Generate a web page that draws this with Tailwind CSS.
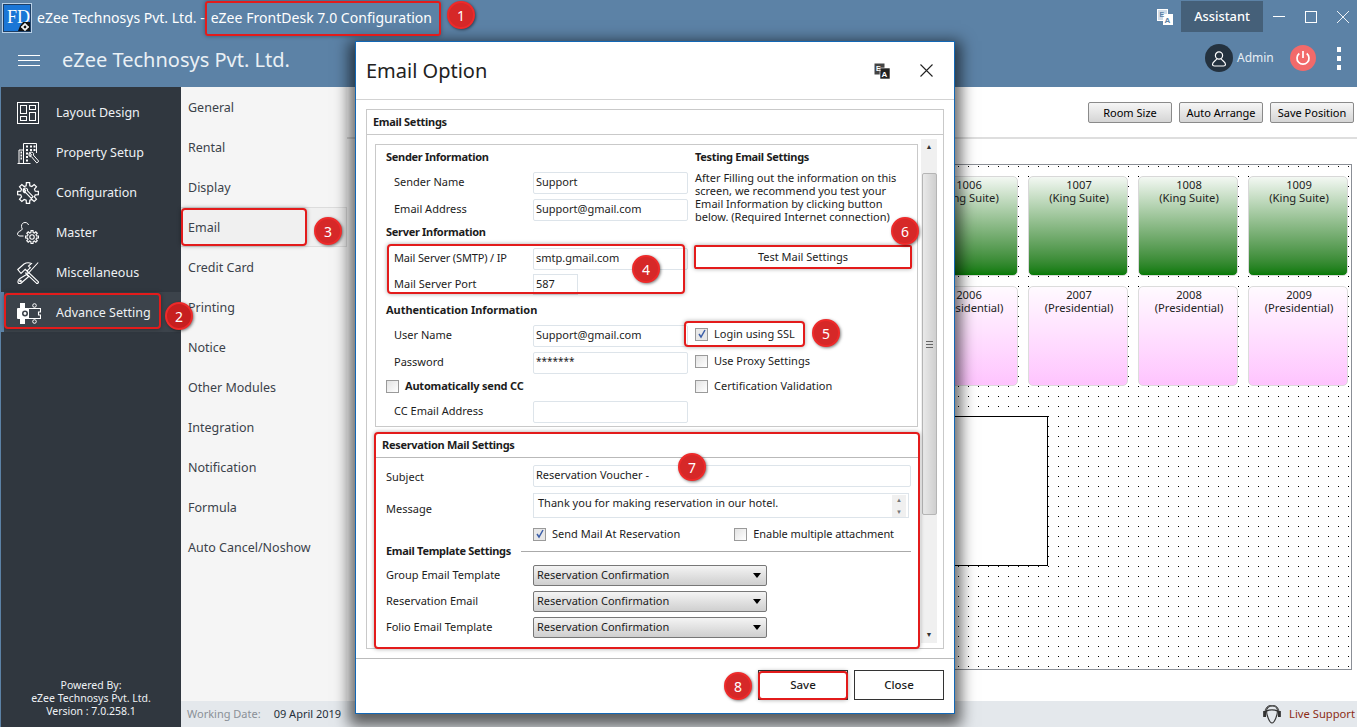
<!DOCTYPE html>
<html>
<head>
<meta charset="utf-8">
<script src="https://cdn.jsdelivr.net/npm/@tailwindcss/browser@4"></script>
</head>
<body class="m-0 overflow-hidden bg-white font-['Noto_Sans','Open_Sans',sans-serif] text-[#222]">
<div class="relative flex h-[727px] w-[1357px] flex-col overflow-hidden">
  <!-- Title + app header -->
  <header class="flex h-[87px] flex-col bg-[#5c82a6] text-white">
    <div class="flex h-[33px] items-center pl-[2px]">
      <div class="relative mt-[2px] h-[30px] w-[30px] border-2 border-[#b9d0e6] bg-[#1a76d6] outline outline-[#1d3f66] -outline-offset-2">
        <span class="absolute left-[3px] top-[3px] font-['Liberation_Serif',serif] text-[18px] leading-[18px] text-white">FD</span>
        <svg class="absolute bottom-0 right-0" width="12" height="9" viewBox="0 0 12 9"><path d="M0 9l2-5 3-4h7v9z" fill="#111"/><circle cx="7" cy="5" r="2.200" fill="none" stroke="#fff" stroke-width="1.500"/><path d="M7 1v1.500M7 7.500V9M3 5h1.500M9.500 5H11" stroke="#fff" stroke-width="1.300"/></svg>
      </div>
      <span class="ml-[5px] whitespace-nowrap pt-[2px] text-[14px]">eZee Technosys Pvt. Ltd. -</span>
      <span class="ml-[6px] whitespace-nowrap pt-[2px] text-[14px] tracking-[0.03px]">eZee FrontDesk 7.0 Configuration</span>
      <div class="ml-auto flex items-center">
        <svg class="mr-[8px]" width="16" height="16" viewBox="0 0 16 16"><rect x=".5" y=".5" width="10" height="11" fill="#cfdce8" stroke="#fff"/><rect x="6" y="5" width="10" height="11" fill="#fff"/><text x="2.500" y="8" font-size="7" font-weight="700" fill="#5c82a6" font-family="Liberation Sans">E</text><text x="7.500" y="14" font-size="8" font-weight="700" fill="#5c82a6" font-family="Liberation Sans">A</text></svg>
        <div class="flex h-[31px] w-[82px] items-center justify-center bg-[#456079] text-[12.800px] font-medium">Assistant</div>
        <div class="flex items-center gap-[20px] pl-[10px] pr-[8px]">
          <svg width="12" height="12" viewBox="0 0 12 12"><path d="M0 5.500h12" stroke="#fff"/></svg>
          <svg width="12" height="12" viewBox="0 0 12 12"><rect x=".5" y=".5" width="11" height="11" fill="none" stroke="#fff"/></svg>
          <svg width="12" height="12" viewBox="0 0 12 12"><path d="M0 0l12 12M12 0L0 12" stroke="#fff" stroke-width=".9"/></svg>
        </div>
      </div>
    </div>
    <div class="flex h-[54px] items-center pl-[18px]">
      <div class="flex w-[22px] flex-col gap-[4px]"><span class="h-px bg-white"></span><span class="h-px bg-white"></span><span class="h-px bg-white"></span></div>
      <span class="ml-[22px] text-[20px] text-[#eaf0f5]">eZee Technosys Pvt. Ltd.</span>
      <div class="mb-[4px] ml-auto flex items-center pr-[16px]">
        <div class="flex h-[28px] w-[28px] items-center justify-center rounded-full bg-[#24323f]">
          <svg width="16" height="17" viewBox="0 0 16 17" fill="none" stroke="#fff" stroke-width="1.200"><circle cx="8" cy="5.500" r="3.600"/><path d="M5.800 8.600C5 11 1.500 11.500 1.500 14.500c0 1 1 1.500 2 1.500h9c1 0 2-.5 2-1.500 0-3-3.500-3.500-4.300-5.900"/></svg>
        </div>
        <span class="ml-[4px] w-[36px] text-[12px] text-[#e7eef5]">Admin</span>
        <div class="ml-[17px] flex h-[26px] w-[26px] items-center justify-center rounded-full bg-[#f26a6a]">
          <svg width="16" height="16" viewBox="0 0 16 16" fill="none" stroke="#fff" stroke-width="1.700"><path d="M8 1v7"/><path d="M4.300 3.500a6 6 0 1 0 7.400 0"/></svg>
        </div>
        <div class="ml-[21px] flex flex-col gap-[4px]"><span class="h-[5px] w-[4px] bg-white"></span><span class="h-[5px] w-[4px] bg-white"></span><span class="h-[5px] w-[4px] bg-white"></span></div>
      </div>
    </div>
  </header>

  <div class="flex min-h-0 flex-1">
    <!-- Sidebar -->
    <aside class="flex w-[181px] flex-col border-l border-[#5c82a6] bg-[#30373f] text-[12.500px] text-[#eef1f4]">
      <nav class="flex flex-col pt-[5px]">
        <a class="flex h-[40px] items-center pl-[16px] pt-[2px]">
          <svg class="mr-[17px]" width="22" height="22" viewBox="0 0 22 22" fill="none" stroke="#fff"><rect x=".5" y=".5" width="21" height="21"/><rect x="3.500" y="3.500" width="6" height="8"/><rect x="12.500" y="3.500" width="6" height="4"/><rect x="3.500" y="14.500" width="6" height="4"/><rect x="12.500" y="10.500" width="6" height="8"/></svg>
          Layout Design</a>
        <a class="flex h-[40px] items-center pl-[16px] pt-[2px]">
          <svg class="mr-[17px]" width="22" height="22" viewBox="0 0 22 22" fill="none" stroke="#fff"><path d="M.5 21.500h13M2 21V8h4.500M6.500 21V1.500h13V11"/><path d="M3.500 10.500h1.500M3.500 13.500h1.500M3.500 16.500h1.500M9 4.500h2M13 4.500h2M16.500 4.500h2M9 8h2M13 8h2M16.500 8h2M9 11.500h2M9 15h2M9 18.500h2" stroke-width="1.800"/><path d="M13 10.500c-1.500 1.200-1.500 3 0 4.300l1.300-.3 5.500 6.500 2-1.700-5.500-6.300.4-1.500c-1-1.500-3-1.700-4.200-.8l2 1.800-.4 1.200-1.200.2z" fill="#30373f"/></svg>
          Property Setup</a>
        <a class="flex h-[40px] items-center pl-[16px] pt-[2px]">
          <svg class="mr-[17px]" width="22" height="22" viewBox="0 0 22 22" fill="none" stroke="#fff"><polygon stroke-width="1.200" points="18.280,9.190 21.370,9.360 21.370,12.640 18.280,12.810 17.430,14.860 19.490,17.170 17.170,19.490 14.860,17.430 12.810,18.280 12.640,21.370 9.360,21.370 9.190,18.280 7.140,17.430 4.830,19.490 2.510,17.170 4.570,14.860 3.720,12.810 .63,12.640 .63,9.360 3.720,9.190 4.570,7.140 2.510,4.830 4.830,2.510 7.140,4.570 9.190,3.720 9.360,.63 12.640,.63 12.810,3.720 14.860,4.570 17.170,2.510 19.490,4.830 17.430,7.140"/><path d="M7 6.500c-1.300 1.300-1.200 3 .2 4.200l1.300-.3 5.800 6 1.800-1.700-5.800-6 .3-1.400c-1-1.300-2.700-1.500-3.800-.7l1.800 1.800-.5 1.100-1.200.2z" stroke-width="1.100"/></svg>
          Configuration</a>
        <a class="flex h-[40px] items-center pl-[16px] pt-[2px]">
          <svg class="mr-[17px]" width="22" height="22" viewBox="0 0 22 22" fill="none" stroke="#fff"><path d="M6.500 14H3c-1.500 0-2.500-1-2.500-2 0-3 4.300-2.800 4.800-5C4.500 5.500 4.500 4.500 4.500 4 4.500 2 6 .5 8 .5S11 1.500 11.500 3"/><g transform="translate(8.200 8.200) scale(.62)"><polygon stroke-width="1.800" points="18.280,9.190 21.370,9.360 21.370,12.640 18.280,12.810 17.430,14.860 19.490,17.170 17.170,19.490 14.860,17.430 12.810,18.280 12.640,21.370 9.360,21.370 9.190,18.280 7.140,17.430 4.830,19.490 2.510,17.170 4.570,14.860 3.720,12.810 .63,12.640 .63,9.360 3.720,9.190 4.570,7.140 2.510,4.830 4.830,2.510 7.140,4.570 9.190,3.720 9.360,.63 12.640,.63 12.810,3.720 14.860,4.570 17.170,2.510 19.490,4.830 17.430,7.140"/><circle cx="11" cy="11" r="3.600" stroke-width="1.800"/></g></svg>
          Master</a>
        <a class="flex h-[40px] items-center pl-[16px] pt-[2px]">
          <svg class="mr-[17px]" width="22" height="22" viewBox="0 0 22 22" fill="none" stroke="#fff" stroke-width="1.100"><path d="M.8 7.500L7 2c2.500-1.500 5-1.500 7.500-.5L11.500 4l1.800 1.800L10 9 8.200 7.300 4 11.500z"/><path d="M10 9l11.200 10.500c.8 1-.8 2.500-1.800 1.700L8.200 10.600"/><path d="M21.200.5L11 11.500l-1.300-1"/><path d="M9.500 12.500L3 16.500c-3 2-2.500 5.500 0 5 1 0 1.500-.8 2.300-1.500l6.500-5.500z"/><circle cx="3.500" cy="19" r=".8"/></svg>
          Miscellaneous</a>
        <a class="relative flex h-[40px] items-center bg-[#3c434b] pl-[16px] pt-[2px] before:absolute before:bottom-0 before:left-[-1px] before:top-0 before:w-[4px] before:bg-[#5c82a6]">
          <svg class="mr-[15px]" width="24" height="21" viewBox="0 0 24 21"><path d="M3 0h5v5h3.500a.5.500 0 0 1 .5.500V16H8v5H3v-5H1a1 1 0 0 1-1-1V6a1 1 0 0 1 1-1h2z" fill="#fff"/><circle cx="8" cy="10.500" r="3" fill="#3c434b"/><circle cx="8" cy="10.500" r="1.400" fill="#fff"/><path d="M12 5.500h11.500v3.500h-2v3h2v3.500H12" fill="none" stroke="#fff" stroke-width="1.100"/><circle cx="17.500" cy="2.500" r="1.800" fill="none" stroke="#fff"/><circle cx="17.500" cy="18.500" r="1.800" fill="none" stroke="#fff"/></svg>
          Advance Setting</a>
      </nav>
      <div class="mt-auto pb-[9px] text-center text-[10.500px] leading-[13px]">Powered By:<br>eZee Technosys Pvt. Ltd.<br>Version : 7.0.258.1</div>
    </aside>

    <!-- Main column -->
    <div class="flex min-w-0 flex-1 flex-col">
      <div class="flex min-h-0 flex-1">
        <div class="flex w-[166px] flex-col bg-[#f5f5f5] text-[12.500px] text-[#3b424a]">
          <a class="flex h-[40px] items-center pl-[7px] pt-[3px]">General</a>
          <a class="flex h-[40px] items-center pl-[7px] pt-[3px]">Rental</a>
          <a class="flex h-[40px] items-center pl-[7px] pt-[3px]">Display</a>
          <a class="flex h-[40px] items-center border-y border-r border-[#dcdcdc] bg-[#f0f0f0] pl-[7px] pt-[3px]">Email</a>
          <a class="flex h-[40px] items-center pl-[7px] pt-[3px]">Credit Card</a>
          <a class="flex h-[40px] items-center pl-[7px] pt-[3px]">Printing</a>
          <a class="flex h-[40px] items-center pl-[7px] pt-[3px]">Notice</a>
          <a class="flex h-[40px] items-center pl-[7px] pt-[3px]">Other Modules</a>
          <a class="flex h-[40px] items-center pl-[7px] pt-[3px]">Integration</a>
          <a class="flex h-[40px] items-center pl-[7px] pt-[3px]">Notification</a>
          <a class="flex h-[40px] items-center pl-[7px] pt-[3px]">Formula</a>
          <a class="flex h-[40px] items-center pl-[7px] pt-[3px]">Auto Cancel/Noshow</a>
        </div>
        <main class="flex min-w-0 flex-1 flex-col pl-[9px] pr-[5px]">
          <div class="ml-[-9px] mr-[-5px] flex h-[52px] shrink-0 items-center justify-end gap-[7px] border-b-2 border-[#dedede] pr-[3px]">
            <button class="h-[21px] w-[84px] rounded-[2px] border border-[#8a8a8a] bg-gradient-to-b from-[#f6f6f6] to-[#d5d5d5] pt-[2px] text-[11px] text-black">Room Size</button>
            <button class="h-[21px] w-[84px] rounded-[2px] border border-[#8a8a8a] bg-gradient-to-b from-[#f6f6f6] to-[#d5d5d5] pt-[2px] text-[11px] text-black">Auto Arrange</button>
            <button class="h-[21px] w-[84px] rounded-[2px] border border-[#8a8a8a] bg-gradient-to-b from-[#f6f6f6] to-[#d5d5d5] pt-[2px] text-[11px] text-black">Save Position</button>
          </div>
          <div class="relative mt-[25px] h-[506px] border border-[#8b8f96] bg-black bg-[linear-gradient(to_right,transparent_1px,white_1px),linear-gradient(to_bottom,transparent_1px,white_1px)] bg-size-[10px_10px] bg-position-[1px_1px] py-[11px] pr-[3px]">
            <div class="grid grid-cols-[repeat(4,100px)] justify-end gap-[10px] text-center text-[11.200px] leading-[13px] text-[#222]">
              <div class="h-[100px] rounded-[5px] border border-[#d8d8d8] bg-gradient-to-b from-[#f3f8f3] to-[#037a03] pl-[2px] pt-[1px]">1006<br>(King Suite)</div>
              <div class="h-[100px] rounded-[5px] border border-[#d8d8d8] bg-gradient-to-b from-[#f3f8f3] to-[#037a03] pl-[2px] pt-[1px]">1007<br>(King Suite)</div>
              <div class="h-[100px] rounded-[5px] border border-[#d8d8d8] bg-gradient-to-b from-[#f3f8f3] to-[#037a03] pl-[2px] pt-[1px]">1008<br>(King Suite)</div>
              <div class="h-[100px] rounded-[5px] border border-[#d8d8d8] bg-gradient-to-b from-[#f3f8f3] to-[#037a03] pl-[2px] pt-[1px]">1009<br>(King Suite)</div>
              <div class="h-[100px] rounded-[5px] border border-[#dcdcdc] bg-gradient-to-b from-[#fffaff] to-[#fec4fe] pl-[2px] pt-[1px]">2006<br>(Presidential)</div>
              <div class="h-[100px] rounded-[5px] border border-[#dcdcdc] bg-gradient-to-b from-[#fffaff] to-[#fec4fe] pl-[2px] pt-[1px]">2007<br>(Presidential)</div>
              <div class="h-[100px] rounded-[5px] border border-[#dcdcdc] bg-gradient-to-b from-[#fffaff] to-[#fec4fe] pl-[2px] pt-[1px]">2008<br>(Presidential)</div>
              <div class="h-[100px] rounded-[5px] border border-[#dcdcdc] bg-gradient-to-b from-[#fffaff] to-[#fec4fe] pl-[2px] pt-[1px]">2009<br>(Presidential)</div>
            </div>
            <div class="absolute left-[500px] top-[251px] h-[150px] w-[191px] border border-black bg-white"></div>
          </div>
        </main>
      </div>
      <!-- Status bar -->
      <footer class="flex h-[26px] shrink-0 items-center bg-[#e4e8ec] pl-[6px] pr-[2px] text-[11px]">
        <span class="text-[#8a9097]">Working Date:</span>
        <span class="ml-[13px] text-[#26303a]">09 April 2019</span>
        <svg class="ml-auto" width="18" height="19" viewBox="0 0 18 19" fill="none" stroke="#333"><path d="M2 9V7a7 7 0 0 1 14 0v2"/><rect x=".7" y="6.500" width="1.800" height="5" fill="#333"/><rect x="15.500" y="6.500" width="1.800" height="5" fill="#333"/><path d="M3.500 6c0-3 2.500-5 5.500-5s5.500 2 5.500 5c0 4-3 12-5.500 12S3.500 10 3.500 6zM4 6c2-1.500 8-1.500 10 0" stroke-width="1.100"/></svg>
        <span class="ml-[8px] text-[11.200px] text-[#8c2d16]">Live Support</span>
      </footer>
    </div>
  </div>

  <!-- Modal -->
  <section class="absolute left-[355px] top-[41px] flex h-[673px] w-[600px] flex-col border border-[#1267b5] bg-white text-[11px] text-[#1c1c1c] shadow-[0_6px_14px_6px_rgba(0,0,0,0.6)]">
    <div class="flex h-[58px] shrink-0 items-center border-b border-[#d3d3d3] pl-[10px] pr-[21px]">
      <h2 class="text-[20px] font-normal text-[#222]">Email Option</h2>
      <svg class="ml-auto" width="16" height="16" viewBox="0 0 16 16"><rect x=".5" y=".5" width="10" height="11" fill="#444"/><rect x="6" y="5" width="10" height="11" fill="#222" stroke="#fff" stroke-width=".6"/><text x="2" y="8" font-size="7" font-weight="700" fill="#fff" font-family="Liberation Sans">E</text><text x="7.500" y="14" font-size="8" font-weight="700" fill="#fff" font-family="Liberation Sans">A</text></svg>
      <svg class="ml-[30px]" width="13" height="13" viewBox="0 0 13 13"><path d="M.5.5l12 12M12.500.5l-12 12" stroke="#222" stroke-width="1.100"/></svg>
    </div>
    <div class="flex min-h-0 flex-1 flex-col px-[10px] pt-[9px]">
      <div class="flex h-[540px] flex-col border border-[#c9c9c9]">
        <div class="flex h-[25px] shrink-0 items-center border-b border-[#c9c9c9] pl-[6px] font-bold tracking-[-0.3px]">Email Settings</div>
        <div class="flex min-h-0 flex-1 pl-[8px] pt-[4px]">
          <div class="flex w-[543px] min-w-0 flex-col pt-[5px]">
            <!-- Upper group -->
            <div class="grid h-[283px] shrink-0 grid-cols-[309px_1fr] border border-[#c9c9c9] pl-[10px] pr-[6px]">
              <div class="flex flex-col">
                <div class="flex h-[24px] items-center font-bold tracking-[-0.3px]">Sender Information</div>
                <div class="flex h-[27px] items-center pl-[8px]"><span class="w-[139px]">Sender Name</span><div class="h-[22px] w-[155px] rounded-[2px] border border-[#dde4ea] px-[2px] pt-[1px]">Support</div></div>
                <div class="flex h-[27px] items-center pl-[8px]"><span class="w-[139px]">Email Address</span><div class="h-[22px] w-[155px] rounded-[2px] border border-[#dde4ea] px-[2px] pt-[1px]">Support@gmail.com</div></div>
                <div class="mb-[3px] flex h-[19px] items-center font-bold tracking-[-0.3px]">Server Information</div>
                <div class="flex h-[27px] items-center pl-[8px]"><span class="w-[139px] tracking-[-0.15px]">Mail Server (SMTP) / IP</span><div class="h-[22px] w-[155px] rounded-[2px] border border-[#dde4ea] px-[2px] pt-[1px]">smtp.gmail.com</div></div>
                <div class="flex h-[24px] items-center pl-[8px]"><span class="w-[139px]">Mail Server Port</span><div class="flex h-[21px] w-[45px] items-center border border-[#dde4ea] px-[2px]">587</div></div>
                <div class="flex h-[26px] items-center pt-[3px] font-bold tracking-[-0.05px]">Authentication Information</div>
                <div class="flex h-[27px] items-center pl-[8px]"><span class="w-[139px]">User Name</span><div class="h-[22px] w-[155px] rounded-[2px] border border-[#dde4ea] px-[2px] pt-[1px]">Support@gmail.com</div></div>
                <div class="flex h-[27px] items-center pl-[8px]"><span class="w-[139px]">Password</span><div class="h-[22px] w-[155px] rounded-[2px] border border-[#dde4ea] px-[2px] pt-[1px] text-[10px]">*******</div></div>
                <div class="flex h-[21px] items-center font-bold tracking-[-0.2px]"><span class="mr-[6px] h-[13px] w-[13px] border border-[#9a9a9a] bg-gradient-to-br from-[#e3e3e3] to-white"></span>Automatically send CC</div>
                <div class="flex h-[29px] items-center pl-[8px]"><span class="w-[139px]">CC Email Address</span><div class="h-[22px] w-[155px] rounded-[2px] border border-[#dde4ea]"></div></div>
              </div>
              <div class="flex flex-col">
                <div class="flex h-[26px] items-center pb-[2px] font-bold tracking-[-0.3px]">Testing Email Settings</div>
                <p class="h-[52px] leading-[13px]">After Filling out the information on this screen, we recommend you test your Email Information by clicking button below. (Required Internet connection)</p>
                <div class="mt-[23px] flex h-[23px] w-[216px] items-center justify-center border border-[#666]">Test Mail Settings</div>
                <div class="mt-[54px] flex h-[22px] items-center"><span class="mr-[6px] flex h-[13px] w-[13px] items-center justify-center border border-[#9a9a9a] bg-[#e8e8e8]"><svg width="10" height="10" viewBox="0 0 10 10"><path d="M2 5l2 3 4-7" fill="none" stroke="#3b5ea8" stroke-width="1.500"/></svg></span>Login using SSL</div>
                <div class="mt-[5px] flex h-[22px] items-center"><span class="mr-[6px] h-[13px] w-[13px] border border-[#9a9a9a] bg-gradient-to-br from-[#e3e3e3] to-white"></span>Use Proxy Settings</div>
                <div class="mt-[3px] flex h-[22px] items-center"><span class="mr-[6px] h-[13px] w-[13px] border border-[#9a9a9a] bg-gradient-to-br from-[#e3e3e3] to-white"></span><span class="tracking-[0.05px]">Certification Validation</span></div>
              </div>
            </div>
            <!-- Reservation group -->
            <div class="mt-[6px] flex flex-col">
              <div class="flex h-[25px] items-center border-b border-[#b9b9b9] pl-[7px] font-bold tracking-[-0.3px]">Reservation Mail Settings</div>
              <div class="flex flex-col pl-[11px] pr-[7px] pt-[5px]">
                <div class="flex h-[25px] items-center"><span class="w-[147px] pt-[3px]">Subject</span><div class="h-[22px] flex-1 rounded-[2px] border border-[#dde4ea] px-[2px] pt-[1px]">Reservation Voucher -</div></div>
                <div class="mt-[5px] flex h-[25px] items-center"><span class="w-[147px] pt-[7px]">Message</span><div class="mr-[2px] flex h-[25px] flex-1 justify-between border border-[#dde4ea] pl-[4px] pr-[2px] pt-px">Thank you for making reservation in our hotel.<span class="flex h-[22px] w-[14px] flex-col items-center justify-between bg-[#f0f0f0] text-[6px] leading-[10px] text-[#777]"><span>▲</span><span>▼</span></span></div></div>
                <div class="mt-[5px] flex h-[22px] items-center pl-[147px]">
                  <span class="mr-[6px] flex h-[13px] w-[13px] items-center justify-center border border-[#9a9a9a] bg-[#e8e8e8]"><svg width="10" height="10" viewBox="0 0 10 10"><path d="M2 5l2 3 4-7" fill="none" stroke="#3b5ea8" stroke-width="1.500"/></svg></span>Send Mail At Reservation
                  <span class="ml-auto mr-[6px] h-[13px] w-[13px] border border-[#9a9a9a] bg-gradient-to-br from-[#e3e3e3] to-white"></span><span class="mr-[17px] tracking-[-0.08px]">Enable multiple attachment</span>
                </div>
                <div class="flex h-[13px] items-center gap-[10px] font-bold tracking-[-0.3px]"><span class="whitespace-nowrap">Email Template Settings</span><span class="h-px flex-1 bg-[#aaa]"></span></div>
                <div class="mt-[4px] flex h-[26px] items-center"><span class="w-[147px]">Group Email Template</span><div class="flex h-[21px] w-[234px] items-center justify-between rounded-[2px] border border-[#777] bg-gradient-to-b from-[#f4f4f4] to-[#cfcfcf] pl-[3px] pr-[5px]">Reservation Confirmation<span class="h-0 w-0 border-x-[4px] border-t-[5px] border-x-transparent border-t-black"></span></div></div>
                <div class="flex h-[26px] items-center"><span class="w-[147px]">Reservation Email</span><div class="flex h-[21px] w-[234px] items-center justify-between rounded-[2px] border border-[#777] bg-gradient-to-b from-[#f4f4f4] to-[#cfcfcf] pl-[3px] pr-[5px]">Reservation Confirmation<span class="h-0 w-0 border-x-[4px] border-t-[5px] border-x-transparent border-t-black"></span></div></div>
                <div class="flex h-[26px] items-center"><span class="w-[147px]">Folio Email Template</span><div class="flex h-[21px] w-[234px] items-center justify-between rounded-[2px] border border-[#777] bg-gradient-to-b from-[#f4f4f4] to-[#cfcfcf] pl-[3px] pr-[5px]">Reservation Confirmation<span class="h-0 w-0 border-x-[4px] border-t-[5px] border-x-transparent border-t-black"></span></div></div>
              </div>
            </div>
          </div>
          <!-- Scrollbar -->
          <div class="ml-[3px] flex h-[504px] w-[16px] flex-col items-center bg-[#f0f0f0] text-[7px] leading-[16px] text-[#333]">
            <span class="h-[34px]">▲</span>
            <div class="relative h-[342px] w-[15px] rounded-[2px] border border-[#b5b5b5] bg-gradient-to-r from-[#e9e9e9] to-[#cfcfcf]"><span class="absolute left-[3px] top-[167px] h-[7px] w-[7px] border-y border-[#666] after:absolute after:left-0 after:top-[2px] after:h-px after:w-full after:bg-[#666]"></span></div>
            <span class="mt-auto">▼</span>
          </div>
        </div>
      </div>
    </div>
    <div class="flex h-[55px] shrink-0 items-center justify-end gap-[6px] border-t border-[#bbb] pb-[2px] pr-[10px] text-[11.500px] font-medium">
      <button class="h-[30px] w-[90px] border border-[#333]">Save</button>
      <button class="h-[30px] w-[90px] border border-[#333]">Close</button>
    </div>
  </section>

  <!-- Red annotation outlines -->
  <div class="absolute left-[205px] top-[1px] h-[35px] w-[236px] rounded-[3px] border-2 border-[#e31b1b] shadow-[0_0_4px_rgba(0,0,0,0.35)]"></div>
  <div class="absolute left-[4px] top-[293px] h-[36px] w-[157px] rounded-[4px] border-2 border-[#e31b1b] shadow-[0_0_4px_rgba(0,0,0,0.35)]"></div>
  <div class="absolute left-[181px] top-[208px] h-[38px] w-[126px] rounded-[4px] border-2 border-[#e31b1b] shadow-[0_0_4px_rgba(0,0,0,0.35)]"></div>
  <div class="absolute left-[387px] top-[244px] h-[50px] w-[298px] rounded-[4px] border-2 border-[#e31b1b] shadow-[0_0_4px_rgba(0,0,0,0.35)]"></div>
  <div class="absolute left-[694px] top-[245px] h-[24px] w-[218px] rounded-[2px] border-2 border-[#e31b1b] shadow-[0_0_4px_rgba(0,0,0,0.35)]"></div>
  <div class="absolute left-[684px] top-[321px] h-[26px] w-[121px] rounded-[4px] border-2 border-[#e31b1b] shadow-[0_0_4px_rgba(0,0,0,0.35)]"></div>
  <div class="absolute left-[374px] top-[432px] h-[217px] w-[546px] rounded-[4px] border-2 border-[#e31b1b] shadow-[0_0_4px_rgba(0,0,0,0.35)]"></div>
  <div class="absolute left-[758px] top-[671px] h-[29px] w-[90px] rounded-[4px] border-2 border-[#e31b1b] shadow-[0_0_4px_rgba(0,0,0,0.35)]"></div>

  <!-- Numbered badges -->
  <div class="absolute left-[447px] top-[1px] flex h-[28px] w-[28px] items-center justify-center rounded-full border-2 border-[#ee2a2a] bg-[#d62828] text-[14px] text-white shadow-[1px_1px_3px_rgba(0,0,0,0.5)]">1</div>
  <div class="absolute left-[165px] top-[302px] flex h-[28px] w-[28px] items-center justify-center rounded-full border-2 border-[#ee2a2a] bg-[#c71f1f] text-[14px] text-white shadow-[1px_1px_3px_rgba(0,0,0,0.5)]">2</div>
  <div class="absolute left-[314px] top-[217px] flex h-[28px] w-[28px] items-center justify-center rounded-full border-2 border-[#ee2a2a] bg-[#d62828] text-[14px] text-white shadow-[1px_1px_3px_rgba(0,0,0,0.5)]">3</div>
  <div class="absolute left-[632px] top-[255px] flex h-[28px] w-[28px] items-center justify-center rounded-full border-2 border-[#ee2a2a] bg-[#d62828] text-[14px] text-white shadow-[1px_1px_3px_rgba(0,0,0,0.5)]">4</div>
  <div class="absolute left-[812px] top-[319px] flex h-[28px] w-[28px] items-center justify-center rounded-full border-2 border-[#ee2a2a] bg-[#d62828] text-[14px] text-white shadow-[1px_1px_3px_rgba(0,0,0,0.5)]">5</div>
  <div class="absolute left-[891px] top-[217px] flex h-[28px] w-[28px] items-center justify-center rounded-full border-2 border-[#ee2a2a] bg-[#d62828] text-[14px] text-white shadow-[1px_1px_3px_rgba(0,0,0,0.5)]">6</div>
  <div class="absolute left-[678px] top-[453px] flex h-[28px] w-[28px] items-center justify-center rounded-full border-2 border-[#ee2a2a] bg-[#d62828] text-[14px] text-white shadow-[1px_1px_3px_rgba(0,0,0,0.5)]">7</div>
  <div class="absolute left-[724px] top-[672px] flex h-[28px] w-[28px] items-center justify-center rounded-full border-2 border-[#ee2a2a] bg-[#d62828] text-[14px] text-white shadow-[1px_1px_3px_rgba(0,0,0,0.5)]">8</div>
</div>
</body>
</html>
